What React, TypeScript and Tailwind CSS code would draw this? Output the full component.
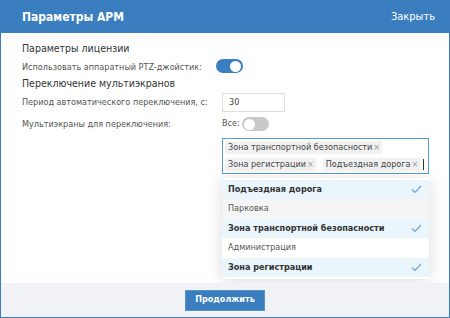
import React from "react";

const font = { fontFamily: '"DejaVu Sans Condensed", "DejaVu Sans", Verdana, sans-serif' };

const Check = () => (
  <svg width="11" height="9" viewBox="0 0 11 9" fill="none">
    <path d="M1 4.5L4 7.5L10 1" stroke="#6aa3d8" strokeWidth="1.2" />
  </svg>
);

const Toggle = ({ on }: { on: boolean }) => (
  <div
    className={`w-[27px] h-[14px] rounded-full flex items-center px-[2px] ${
      on ? "bg-[#3a7ebf] justify-end" : "bg-[#c9c9c9] justify-start"
    }`}
  >
    <div className="w-[11px] h-[11px] rounded-full bg-white" />
  </div>
);

const Tag = ({ label }: { label: string }) => (
  <span className="inline-flex items-center h-[13px] pl-[3px] pr-[2px] bg-[#f1f1f1] text-[#444] text-[9px] leading-none">
    {label}
    <span className="text-[#999] text-[9px] ml-[1px]">×</span>
  </span>
);

const options = [
  { label: "Подъездная дорога", selected: true },
  { label: "Парковка", selected: false, hover: true },
  { label: "Зона транспортной безопасности", selected: true },
  { label: "Администрация", selected: false },
  { label: "Зона регистрации", selected: true },
];

export default function App() {
  return (
    <div
      className="w-[450px] h-[318px] flex flex-col border border-[#3a7ebf] overflow-hidden bg-white"
      style={font}
    >
      {/* Header */}
      <div className="h-[32px] shrink-0 bg-[#3a7ebf] flex items-center justify-between pl-[21px] pr-[14px]">
        <span className="text-white font-bold text-[12px]">Параметры АРМ</span>
        <span className="text-white text-[11px]">Закрыть</span>
      </div>

      {/* Content */}
      <div className="flex-1 pl-[21px] pr-[20px] pt-[7px]">
        <div className="text-[10.5px] text-[#333] leading-[16px]">Параметры лицензии</div>

        <div className="flex items-center h-[14px] mt-[3px]">
          <span className="w-[194px] text-[9px] text-[#555] pt-[3px]">Использовать аппаратный PTZ-джойстик:</span>
          <Toggle on />
        </div>

        <div className="text-[10.5px] text-[#333] leading-[16px] mt-[2px]">Переключение мультиэкранов</div>

        <div className="flex items-center h-[19px] mt-[2px]">
          <span className="w-[200px] text-[9px] text-[#555]">Период автоматического переключения, с:</span>
          <div className="w-[63px] h-[19px] border border-[#ddd] flex items-center px-[6px] text-[9px] text-[#444]">
            30
          </div>
        </div>

        <div className="flex items-center h-[14px] mt-[5px]">
          <span className="w-[200px] text-[9px] text-[#555] pt-[1px]">Мультиэкраны для переключения:</span>
          <span className="text-[9px] text-[#555] mr-[2px]">Все:</span>
          <Toggle on={false} />
        </div>

        <div className="ml-[200px] mt-[7px] w-[207px]">
          <div className="h-[36px] border border-[#5b9bd5] pl-[2px] pt-[2px] flex flex-wrap gap-x-[7px] gap-y-[4px] content-start">
            <Tag label="Зона транспортной безопасности" />
            <Tag label="Зона регистрации" />
            <Tag label="Подъездная дорога" />
            <span className="w-[1px] h-[11px] bg-[#333] self-center ml-[-4px]" />
          </div>

          <div className="mt-[4px] shadow-[0_2px_16px_rgba(0,0,0,0.14)] bg-white py-[2px]">
            {options.map((o) => (
              <div
                key={o.label}
                className={`h-[19.4px] flex items-center justify-between pl-[6px] pr-[7px] text-[9px] ${
                  o.selected
                    ? "bg-[#eaf5fc] font-bold text-[#333]"
                    : o.hover
                    ? "bg-[#f5f5f5] text-[#555]"
                    : "bg-white text-[#555]"
                }`}
              >
                <span>{o.label}</span>
                {o.selected && <Check />}
              </div>
            ))}
          </div>
        </div>
      </div>

      {/* Footer */}
      <div className="h-[34px] shrink-0 bg-[#f0f2f6] flex items-center justify-center">
        <button className="w-[80px] h-[21px] bg-[#3a7ebf] border border-[#5b93c9] text-white text-[9px] font-bold">
          Продолжить
        </button>
      </div>
    </div>
  );
}
